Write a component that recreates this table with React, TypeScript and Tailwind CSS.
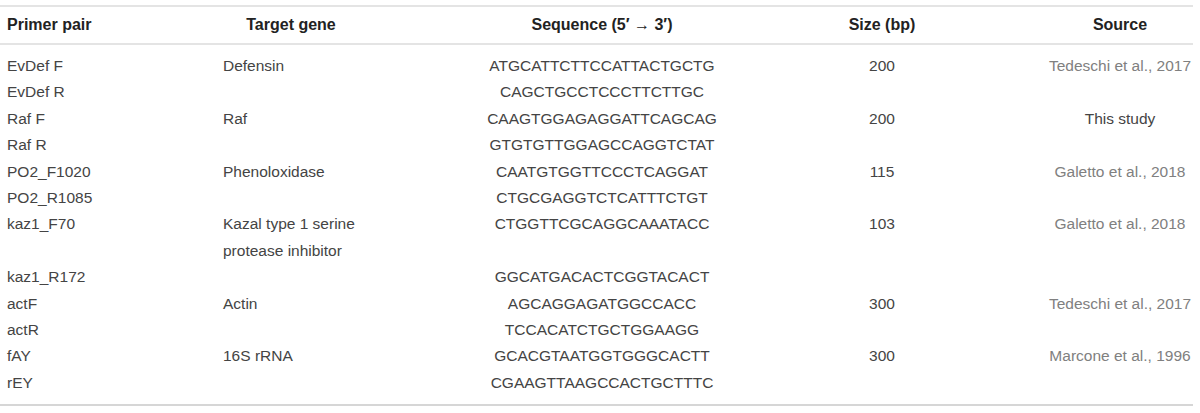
type Row = {
  primer: string
  gene?: string
  seq: string
  size?: string
  source?: string
  cited?: boolean
}

const rows: Row[] = [
  { primer: 'EvDef F', gene: 'Defensin', seq: 'ATGCATTCTTCCATTACTGCTG', size: '200', source: 'Tedeschi et al., 2017', cited: true },
  { primer: 'EvDef R', seq: 'CAGCTGCCTCCCTTCTTGC' },
  { primer: 'Raf F', gene: 'Raf', seq: 'CAAGTGGAGAGGATTCAGCAG', size: '200', source: 'This study' },
  { primer: 'Raf R', seq: 'GTGTGTTGGAGCCAGGTCTAT' },
  { primer: 'PO2_F1020', gene: 'Phenoloxidase', seq: 'CAATGTGGTTCCCTCAGGAT', size: '115', source: 'Galetto et al., 2018', cited: true },
  { primer: 'PO2_R1085', seq: 'CTGCGAGGTCTCATTTCTGT' },
  { primer: 'kaz1_F70', gene: 'Kazal type 1 serine protease inhibitor', seq: 'CTGGTTCGCAGGCAAATACC', size: '103', source: 'Galetto et al., 2018', cited: true },
  { primer: 'kaz1_R172', seq: 'GGCATGACACTCGGTACACT' },
  { primer: 'actF', gene: 'Actin', seq: 'AGCAGGAGATGGCCACC', size: '300', source: 'Tedeschi et al., 2017', cited: true },
  { primer: 'actR', seq: 'TCCACATCTGCTGGAAGG' },
  { primer: 'fAY', gene: '16S rRNA', seq: 'GCACGTAATGGTGGGCACTT', size: '300', source: 'Marcone et al., 1996', cited: true },
  { primer: 'rEY', seq: 'CGAAGTTAAGCCACTGCTTTC' },
]

const cols = 'grid grid-cols-[216px_150px_472px_88px_267px]'

export default function App() {
  return (
    <div className="bg-white w-[1200px] h-[413px] pt-[5px] font-['Liberation_Sans',Arial,sans-serif] text-[15.5px]">
      <div className="w-[1193px] border-t-2 border-b-2 border-t-[#e4e4e4] border-b-[#d6d6d6]">
        <div className={`${cols} h-[38px] items-center border-b-2 border-[#e4e4e4] font-bold text-[16px] text-[#222] leading-[26.4px]`}>
          <div className="pl-[7px]">Primer pair</div>
          <div className="pl-[7px] pr-[7px] text-center">Target gene</div>
          <div className="text-center">Sequence (5′ → 3′)</div>
          <div className="text-center">Size (bp)</div>
          <div className="pl-[121px] text-center">Source</div>
        </div>
        <div className="pt-[8px] pb-[8px] leading-[26.4px] text-[#444]">
          {rows.map((r) => (
            <div key={r.primer} className={cols}>
              <div className="pl-[7px]">{r.primer}</div>
              <div className="pl-[7px] pr-[7px]">{r.gene}</div>
              <div className="text-center">{r.seq}</div>
              <div className="text-center">{r.size}</div>
              <div className={`pl-[121px] text-center ${r.cited ? 'text-[#808080]' : ''}`}>{r.source}</div>
            </div>
          ))}
        </div>
      </div>
    </div>
  )
}
